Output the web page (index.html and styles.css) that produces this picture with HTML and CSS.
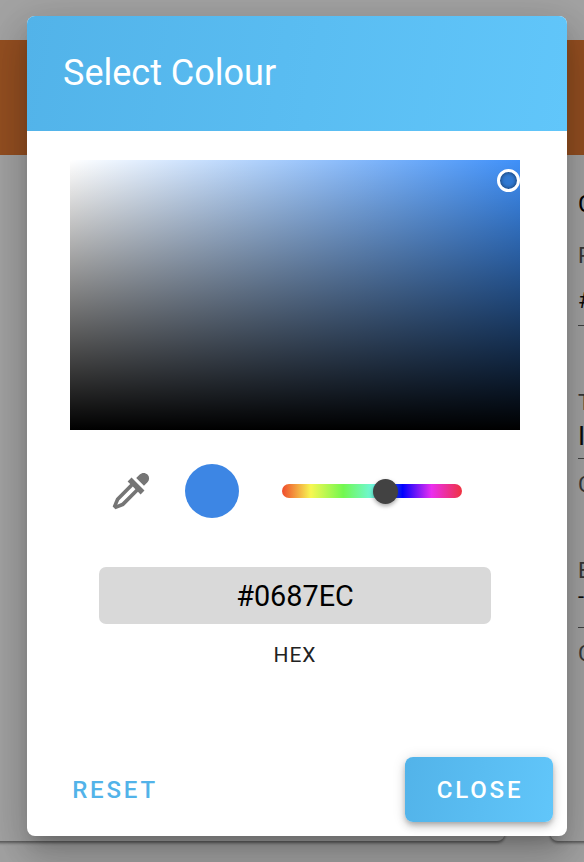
FILE: index.html
```html
<!DOCTYPE html>
<html lang="en">
<head>
    <meta charset="UTF-8">
    <title>Select Colour</title>
    <link rel="stylesheet" href="styles.css">
</head>
<body>
    <!-- Page behind the dialog -->
    <div class="page">
        <div class="banner"></div>
        <div class="cards">
            <div class="card card-main"></div>
            <div class="card card-side">
                <div class="card-title">Colours</div>
                <div class="field field-first">
                    <div class="field-label">Primary</div>
                    <div class="field-value">#0687EC</div>
                </div>
                <div class="field field-second">
                    <div class="field-label">Title</div>
                    <div class="field-value field-value-tall">Inter</div>
                    <div class="field-help">Choose</div>
                </div>
                <div class="field field-third">
                    <div class="field-label">Body</div>
                    <div class="field-value field-value-dash">-</div>
                    <div class="field-help">Choose</div>
                </div>
            </div>
        </div>
    </div>

    <!-- Colour picker dialog -->
    <div class="backdrop">
        <div class="dialog">
            <div class="dialog-header">Select Colour</div>
            <div class="dialog-body">
                <div class="canvas">
                    <div class="canvas-marker"></div>
                </div>
                <div class="controls">
                    <svg class="dropper" viewBox="0 0 24 24">
                        <path d="M19.35,11.72L17.22,13.85L15.81,12.43L8.1,20.14L3.5,22L2,20.5L3.86,15.9L11.57,8.19L10.15,6.78L12.28,4.65L19.35,11.72M16.76,3C17.93,1.83 19.83,1.83 21,3C22.17,4.17 22.17,6.07 21,7.24L19.08,9.16L14.84,4.92L16.76,3M5.56,17.03L4.5,19.5L6.97,18.44L14.4,11L13,9.6L5.56,17.03Z"/>
                    </svg>
                    <div class="swatch"></div>
                    <div class="hue">
                        <div class="hue-thumb"></div>
                    </div>
                </div>
                <div class="hex-box">#0687EC</div>
                <div class="hex-label">HEX</div>
            </div>
            <div class="dialog-footer">
                <button class="btn btn-text">Reset</button>
                <button class="btn btn-solid">Close</button>
            </div>
        </div>
    </div>
</body>
</html>
```

FILE: styles.css
```css
html, body {
    margin: 0;
    padding: 0;
    height: 862px;
    overflow: hidden;
}
body {
    font-family: Roboto, "Liberation Sans", sans-serif;
    background-color: #fafafa;
    position: relative;
}
.page {
    height: 862px;
    padding-top: 40px;
    box-sizing: border-box;
    overflow: hidden;
}
.banner {
    height: 115px;
    background-color: #e47a34;
}
.cards {
    display: flex;
    height: 686px;
    gap: 45px;
    margin-left: -20px;
}
.card {
    background-color: #fafafa;
    border-radius: 0 0 8px 8px;
    box-shadow: 0 2px 3px rgba(0, 0, 0, 0.45);
    flex-shrink: 0;
}
.card-main {
    width: 525px;
}
.card-side {
    width: 300px;
    padding: 36px 0 0 28px;
    box-sizing: border-box;
    white-space: nowrap;
}
.card-title {
    font-size: 24px;
    line-height: 26px;
    color: #000;
}
.field {
    border: none;
    color: #444;
}
.field-first {
    margin-top: 27px;
}
.field-second {
    margin-top: 65px;
}
.field-third {
    margin-top: 62px;
}
.field-label {
    font-size: 22px;
    line-height: 24px;
    color: #555;
}
.field-value {
    font-size: 22px;
    line-height: 26px;
    margin-top: 20px;
    padding-bottom: 11px;
    color: #111;
    border-bottom: 1px solid #666;
}
.field-value-tall {
    font-size: 26px;
    margin-top: 8px;
    padding-bottom: 9px;
}
.field-value-dash {
    margin-top: 1px;
    padding-bottom: 17px;
}
.field-help {
    font-size: 22px;
    line-height: 24px;
    margin-top: 14px;
    color: #555;
}
.backdrop {
    position: absolute;
    top: 0;
    left: 0;
    width: 584px;
    height: 862px;
    background-color: rgba(0, 0, 0, 0.35);
}
.dialog {
    width: 540px;
    height: 820px;
    margin: 16px 0 0 27px;
    background-color: #fff;
    border-radius: 8px;
    overflow: hidden;
    display: flex;
    flex-direction: column;
    box-shadow: 0 11px 15px -7px rgba(0, 0, 0, 0.2), 0 24px 38px 3px rgba(0, 0, 0, 0.14), 0 9px 46px 8px rgba(0, 0, 0, 0.12);
}
.dialog-header {
    height: 115px;
    flex-shrink: 0;
    padding-left: 36px;
    box-sizing: border-box;
    font-size: 36px;
    line-height: 114px;
    color: #fff;
    background: linear-gradient(100deg, #52b3e9, #61c6fa);
}
.dialog-body {
    flex: 1;
    padding: 29px 4px 0 0;
    display: flex;
    flex-direction: column;
    align-items: center;
}
.canvas {
    width: 450px;
    height: 270px;
    position: relative;
    overflow: hidden;
    background:
        linear-gradient(to top, #000, rgba(0, 0, 0, 0)),
        linear-gradient(to right, #fff, #3f90f8);
}
.canvas-marker {
    position: absolute;
    left: 427px;
    top: 8.5px;
    width: 17px;
    height: 17px;
    border: 3px solid #fff;
    border-radius: 50%;
    background-color: #3079d2;
    box-shadow: inset 0 0 4px rgba(0, 0, 0, 0.6);
}
.controls {
    width: 450px;
    height: 54px;
    margin-top: 34px;
    display: flex;
    align-items: center;
}
.dropper {
    width: 44px;
    height: 44px;
    margin-left: 39px;
    fill: #757575;
}
.swatch {
    width: 54px;
    height: 54px;
    margin-left: 32px;
    border-radius: 50%;
    background-color: #3d86e4;
}
.hue {
    width: 180px;
    height: 14px;
    margin-left: 43px;
    border-radius: 7px;
    position: relative;
    background: linear-gradient(to right, #ef4b2c 0%, #f7f752 16%, #72f850 34%, #6ff7e2 51%, #0000ff 67%, #ea2ef0 83%, #ef3340 100%);
}
.hue-thumb {
    position: absolute;
    left: 91px;
    top: -5.5px;
    width: 25px;
    height: 25px;
    border-radius: 50%;
    background-color: #424242;
    box-shadow: 0 2px 4px rgba(0, 0, 0, 0.35);
}
.hex-box {
    width: 392px;
    height: 57px;
    margin-top: 49px;
    border-radius: 7px;
    background-color: #d9d9d9;
    color: #000;
    font-size: 28.8px;
    line-height: 59px;
    text-align: center;
}
.hex-label {
    margin-top: 18px;
    font-size: 21px;
    line-height: 26px;
    color: #222;
    letter-spacing: 1px;
}
.dialog-footer {
    height: 65px;
    padding: 0 14px 14px 27px;
    display: flex;
    justify-content: space-between;
    align-items: flex-start;
    flex-shrink: 0;
}
.btn {
    font-family: Roboto, "Liberation Sans", sans-serif;
    font-size: 24px;
    font-weight: 500;
    letter-spacing: 2.8px;
    text-transform: uppercase;
    border: none;
    border-radius: 8px;
    height: 65px;
    padding: 0;
    cursor: pointer;
}
.btn-text {
    background: none;
    color: #52b3e9;
    width: 122px;
}
.btn-solid {
    width: 148px;
    padding-left: 2px;
    color: #fff;
    background: linear-gradient(100deg, #52b3e9, #61c6fa);
    box-shadow: 0 3px 5px -1px rgba(0, 0, 0, 0.2), 0 5px 8px rgba(0, 0, 0, 0.14), 0 1px 14px rgba(0, 0, 0, 0.12);
}
```
